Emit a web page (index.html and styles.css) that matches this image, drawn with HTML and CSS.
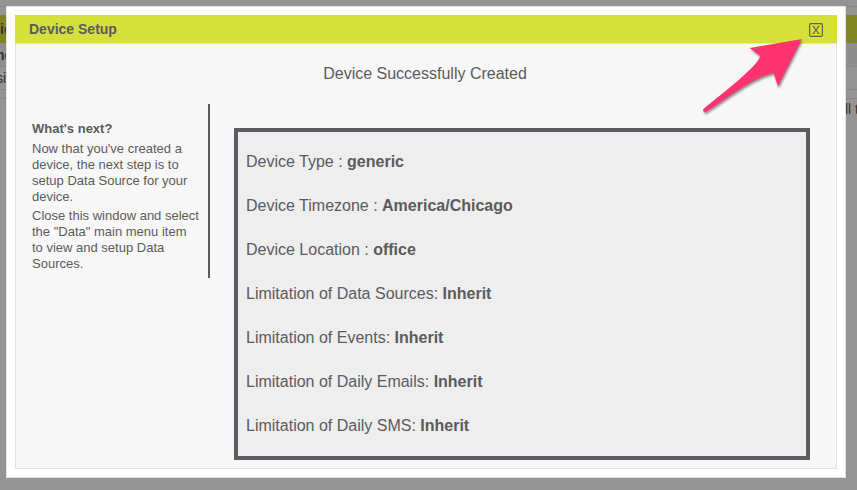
FILE: index.html
```html
<!DOCTYPE html>
<html lang="en">
<head>
<meta charset="utf-8">
<title>Device Setup</title>
<link rel="stylesheet" href="styles.css">
</head>
<body>
<div class="backdrop">
  <div class="backdrop-row backdrop-head"><b class="edge-left">ic</b></div>
  <div class="backdrop-row backdrop-alt"><b class="edge-left edge-cut">ne</b></div>
  <div class="backdrop-row"><span class="edge-left edge-cut">si</span></div>
  <div class="backdrop-gap"></div>
  <div class="backdrop-note"><span class="edge-right">ll t</span></div>
</div>
<main class="modal" role="dialog" aria-labelledby="modal-title">
  <div class="panel">
    <header class="panel-head">
      <h1 class="panel-title" id="modal-title">Device Setup</h1>
      <button class="close" type="button" aria-label="Close">
        <svg width="14" height="14" viewBox="0 0 14 14" fill="none" stroke="#5f6050">
          <rect x="0.6" y="0.6" width="12.8" height="12.8" rx="1.5" stroke-width="1.2"/>
          <path d="M4.4 3.5L9.6 10.5M9.6 3.5L4.4 10.5" stroke-width="1.2"/>
          <path d="M3.5 3.5H5.5M8.5 3.5H10.5M3.5 10.5H5.5M8.5 10.5H10.5" stroke-width="0.8"/>
        </svg>
      </button>
    </header>
    <div class="panel-body">
      <h2 class="message">Device Successfully Created</h2>
      <div class="columns">
        <aside class="help">
          <h3 class="help-title">What's next?</h3>
          <p>Now that you've created a device, the next step is to setup Data Source for your device.</p>
          <p>Close this window and select the "Data" main menu item to view and setup Data Sources.</p>
        </aside>
        <ul class="details">
          <li>Device Type : <b>generic</b></li>
          <li>Device Timezone : <b>America/Chicago</b></li>
          <li>Device Location : <b>office</b></li>
          <li>Limitation of Data Sources: <b>Inherit</b></li>
          <li>Limitation of Events: <b>Inherit</b></li>
          <li>Limitation of Daily Emails: <b>Inherit</b></li>
          <li>Limitation of Daily SMS: <b>Inherit</b></li>
        </ul>
      </div>
    </div>
  </div>
  <svg class="arrow" width="112" height="88" viewBox="696 34 112 88" aria-hidden="true">
    <path d="M802 39L749.7 48L760.3 56C757 67 725 91 703.5 109Q702 112 705.5 112.3C728 98 753 77 773.7 73.3L778 86.5Z" fill="#ff336f"/>
  </svg>
</main>
</body>
</html>
```
FILE: styles.css
```css
* {
  box-sizing: border-box;
}

body {
  margin: 0;
  min-height: 100vh;
  padding: 6px 11px 12px 6px;
  display: flex;
  position: relative;
  overflow: hidden;
  background: #949494;
  color: #5b5b5b;
  font-family: "Liberation Sans", Arial, sans-serif;
  font-size: 16px;
  line-height: 20px;
}

h1, h2, h3, p, ul {
  margin: 0;
  padding: 0;
}

/* Dimmed page behind the dialog */
.backdrop {
  position: absolute;
  inset: 0;
  padding-top: 15px;
  background: linear-gradient(#868686, #868686) 0 6px / 100% 1px no-repeat;
  color: #333333;
  font-size: 14px;
}

.backdrop-row {
  height: 23px;
  display: flex;
  align-items: center;
  border-bottom: 1px solid #868686;
}

.backdrop-head {
  height: 28px;
  border-bottom: 0;
  background: #808422;
}

.backdrop-alt {
  height: 24px;
  background: #8e8e8e;
}

.backdrop-gap {
  height: 9px;
  border-bottom: 1px solid #868686;
}

.backdrop-note {
  display: flex;
  justify-content: flex-end;
}

/* Text that runs on beneath the dialog */
.edge-left {
  white-space: nowrap;
}

.edge-cut {
  margin-left: -4px;
}

.edge-right {
  width: 12px;
  white-space: nowrap;
}

/* Dialog */
.modal {
  flex: 1;
  display: flex;
  position: relative;
  padding: 8px;
  border: 1px solid #e2e2e2;
  background: #ffffff;
}

.panel {
  flex: 1;
  display: flex;
  flex-direction: column;
}

.panel-head {
  height: 28px;
  display: flex;
  align-items: center;
  justify-content: space-between;
  padding: 0 14px;
  background: #d5e03b;
}

.panel-title {
  font-size: 14px;
  line-height: 20px;
}

.close {
  display: flex;
  margin-top: 2px;
  padding: 0;
  border: 0;
  background: none;
  cursor: pointer;
}

.panel-body {
  flex: 1;
  padding: 20px 26px 8px 16px;
  border: 1px solid #e2e2e2;
  background: #f7f7f7;
}

.message {
  font-size: 16px;
  font-weight: normal;
  text-align: center;
  padding-left: 8px;
}

.columns {
  display: flex;
  align-items: flex-start;
  gap: 24px;
  padding-top: 20px;
}

.help {
  width: 178px;
  padding: 17px 8px 6px 0;
  border-right: 2px solid #5d5d61;
  font-size: 13px;
  line-height: 16px;
}

.help-title {
  padding-bottom: 1px;
  font-size: 13px;
  line-height: 16px;
}

.help p {
  margin-top: 3px;
}

.details {
  flex: 1;
  margin-top: 24px;
  padding: 8px;
  border: 4px solid #5d5d61;
  background: #eeeeee;
  list-style: none;
}

.details li {
  padding: 12px 0;
}

.arrow {
  position: absolute;
  top: 27px;
  right: 37px;
  filter: drop-shadow(1px 2px 1px rgba(0, 0, 0, 0.4));
  pointer-events: none;
}
```
